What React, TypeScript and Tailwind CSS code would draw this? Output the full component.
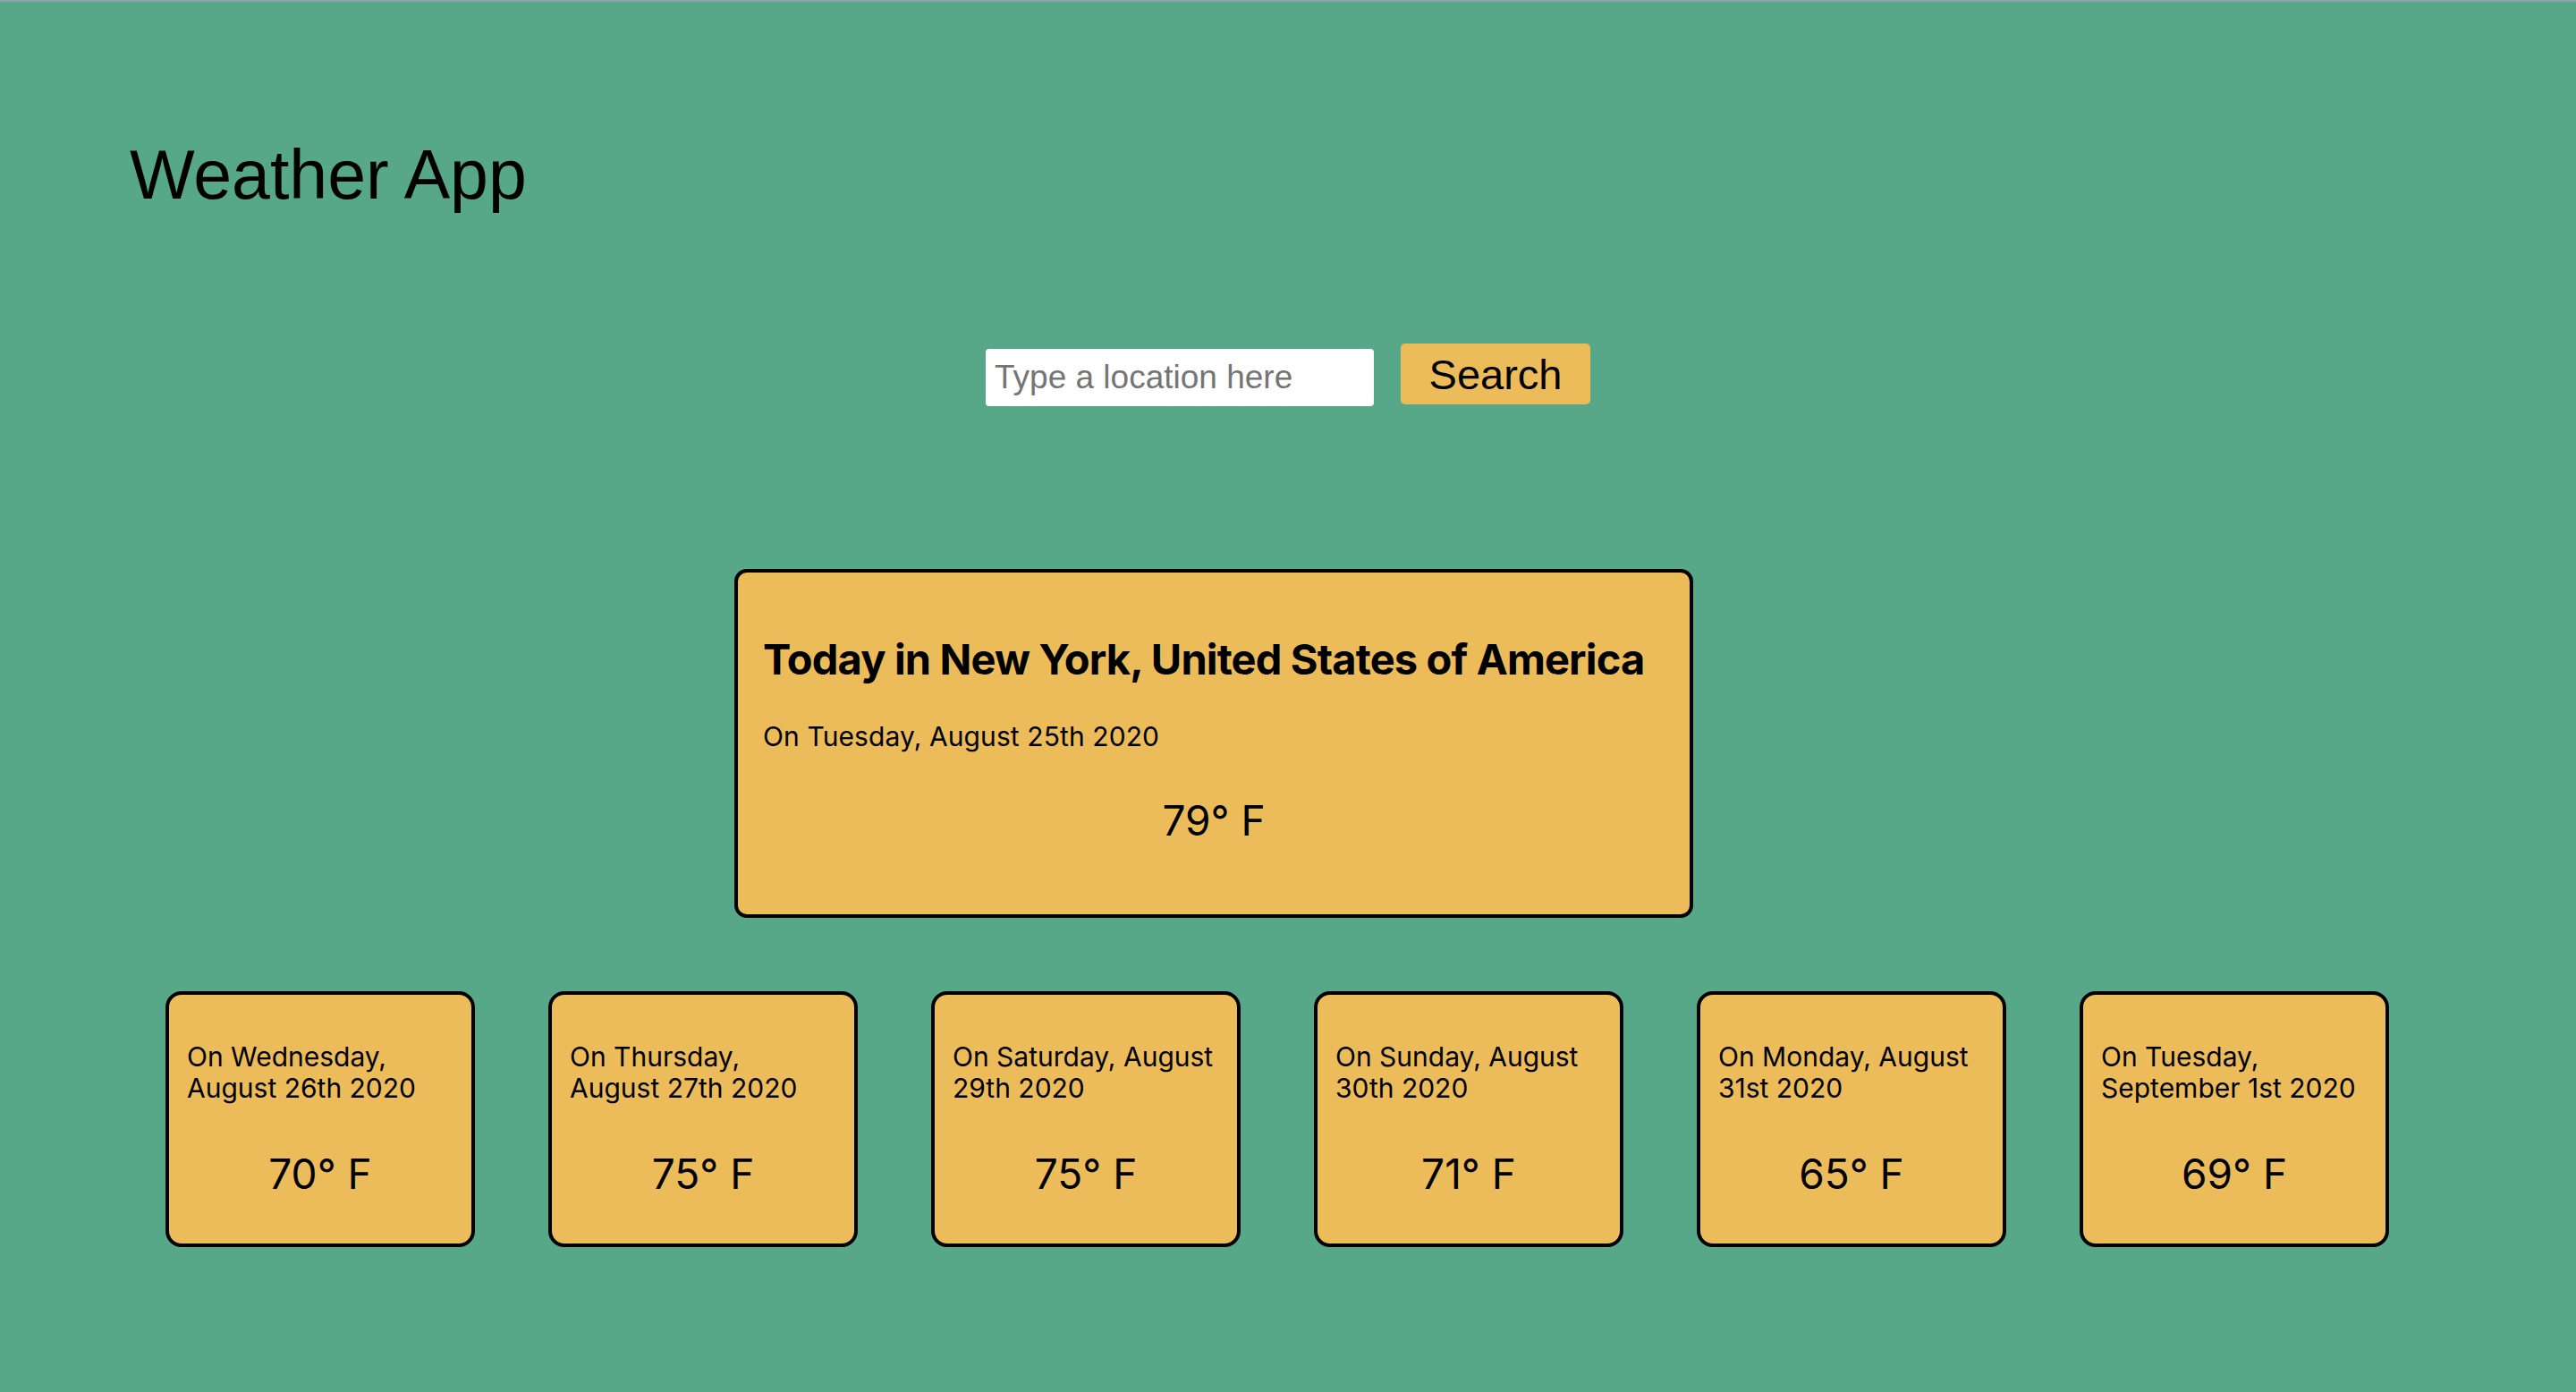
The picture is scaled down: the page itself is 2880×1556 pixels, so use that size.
import React from 'react';

type Forecast = { day: string; temp: number };

const forecasts: Forecast[] = [
    { day: 'On Wednesday, August 26th 2020', temp: 70 },
    { day: 'On Thursday, August 27th 2020', temp: 75 },
    { day: 'On Saturday, August 29th 2020', temp: 75 },
    { day: 'On Sunday, August 30th 2020', temp: 71 },
    { day: 'On Monday, August 31st 2020', temp: 65 },
    { day: 'On Tuesday, September 1st 2020', temp: 69 },
];

const ForecastCard: React.FC<Forecast> = ({ day, temp }) => (
    <div className="w-[346px] h-[286px] shrink-0 bg-[#ecbc5a] border-4 border-black rounded-[18px] pt-[52px] px-[20px] font-['Inter',sans-serif] text-black">
        <p className="text-[30px] leading-[35px]">{day}</p>
        <p className="mt-[50px] text-center text-[46px] leading-[56px]">{temp}° F</p>
    </div>
);

const App: React.FC = () => {
    return (
        <div className="min-h-screen bg-[#57a789] border-t-2 border-[#93a2ad] overflow-hidden">
            <h1 className="mt-[155px] pl-[145px] text-[77px] leading-[77px] font-['Liberation_Sans',Arial,sans-serif] text-black">
                Weather App
            </h1>

            {/* search */}
            <div className="mt-[150px] flex justify-center items-start gap-[30px] font-['Liberation_Sans',Arial,sans-serif]">
                <input
                    type="text"
                    placeholder="Type a location here"
                    className="mt-[6px] w-[434px] h-[64px] bg-white rounded-[4px] px-[10px] text-[37px] text-black placeholder:text-[#757575] outline-none"
                />
                <button className="w-[212px] h-[68px] bg-[#ecbc5a] rounded-[5px] text-[47px] leading-none text-black">
                    Search
                </button>
            </div>

            {/* today */}
            <div className="mt-[182px] ml-[821px] w-[1072px] h-[390px] bg-[#ecbc5a] border-4 border-black rounded-[14px] pt-[69px] pl-[28px] pr-[20px] font-['Inter',sans-serif] text-black">
                <h2 className="text-[47px] leading-[56px] font-bold tracking-[-0.85px]">
                    Today in New York, United States of America
                </h2>
                <p className="mt-[40px] text-[30px] leading-[36px] tracking-[0.1px]">On Tuesday, August 25th 2020</p>
                <p className="mt-[48px] text-center text-[46px] leading-[56px] -ml-[8px]">79° F</p>
            </div>

            {/* next days */}
            <div className="mt-[82px] pl-[185px] flex gap-[82px]">
                {forecasts.map((f, i) => (
                    <ForecastCard key={i} day={f.day} temp={f.temp} />
                ))}
            </div>
        </div>
    );
};

export default App;
